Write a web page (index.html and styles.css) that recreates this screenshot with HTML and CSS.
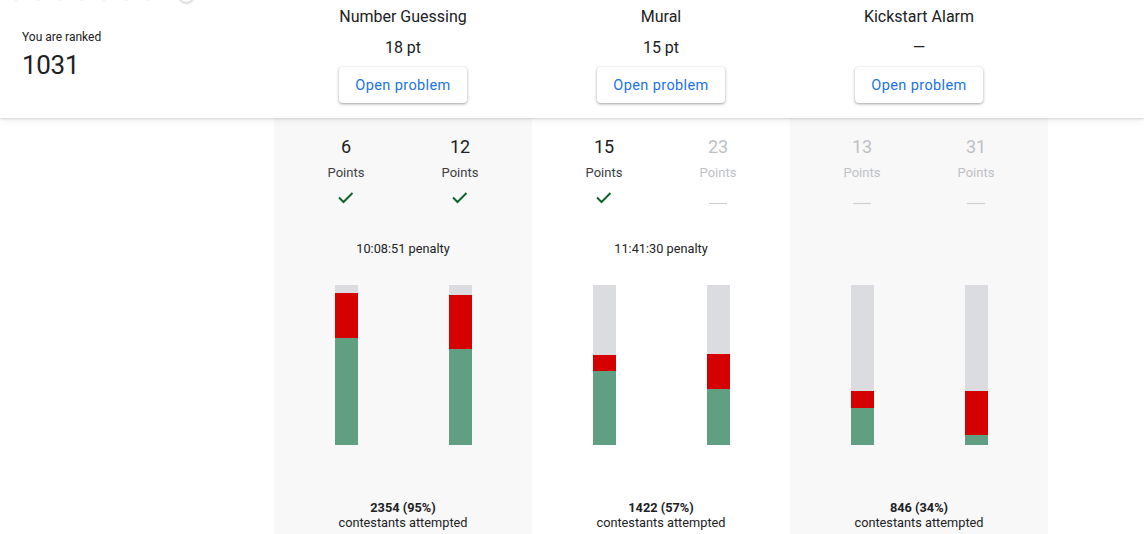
FILE: index.html
```html
<!DOCTYPE html>
<html>
<head>
<meta charset="utf-8">
<link rel="stylesheet" href="styles.css">
</head>
<body>
<header class="header">
  <div class="rank">
    <div class="rank-top">
      <span class="dot"></span><span class="dot"></span><span class="dot"></span><span class="dot"></span><span class="dot"></span><span class="dot"></span><span class="dot"></span>
      <span class="knob"></span>
    </div>
    <div class="rank-label">You are ranked</div>
    <div class="rank-value">1031</div>
  </div>
  <div class="hcol">
    <div class="htitle">Number Guessing</div>
    <div class="hscore">18 pt</div>
    <button class="open-btn">Open problem</button>
  </div>
  <div class="hcol">
    <div class="htitle">Mural</div>
    <div class="hscore">15 pt</div>
    <button class="open-btn">Open problem</button>
  </div>
  <div class="hcol">
    <div class="htitle">Kickstart Alarm</div>
    <div class="hscore">—</div>
    <button class="open-btn">Open problem</button>
  </div>
</header>
<main class="main">
  <div class="spacer"></div>

  <section class="col shaded">
    <div class="tests">
      <div class="test">
        <div class="pts">6</div>
        <div class="pts-label">Points</div>
        <svg class="status" viewBox="0 0 24 24"><path d="M5 11.5 L9.5 16 L18.5 7" fill="none" stroke="#0d652d" stroke-width="2"/></svg>
      </div>
      <div class="test">
        <div class="pts">12</div>
        <div class="pts-label">Points</div>
        <svg class="status" viewBox="0 0 24 24"><path d="M5 11.5 L9.5 16 L18.5 7" fill="none" stroke="#0d652d" stroke-width="2"/></svg>
      </div>
    </div>
    <div class="penalty">10:08:51 penalty</div>
    <div class="bars">
      <div class="bar-cell"><div class="bar"><div class="seg rest"></div><div class="seg wrong" style="height:45px"></div><div class="seg right" style="height:107px"></div></div></div>
      <div class="bar-cell"><div class="bar"><div class="seg rest"></div><div class="seg wrong" style="height:54px"></div><div class="seg right" style="height:96px"></div></div></div>
    </div>
    <div class="attempts"><b>2354 (95%)</b><span>contestants attempted</span></div>
  </section>

  <section class="col">
    <div class="tests">
      <div class="test">
        <div class="pts">15</div>
        <div class="pts-label">Points</div>
        <svg class="status" viewBox="0 0 24 24"><path d="M5 11.5 L9.5 16 L18.5 7" fill="none" stroke="#0d652d" stroke-width="2"/></svg>
      </div>
      <div class="test off">
        <div class="pts">23</div>
        <div class="pts-label">Points</div>
        <svg class="status" viewBox="0 0 24 24"><path d="M3 17.5 H21" fill="none" stroke="#cfd1d4" stroke-width="1.2"/></svg>
      </div>
    </div>
    <div class="penalty">11:41:30 penalty</div>
    <div class="bars">
      <div class="bar-cell"><div class="bar"><div class="seg rest"></div><div class="seg wrong" style="height:16px"></div><div class="seg right" style="height:74px"></div></div></div>
      <div class="bar-cell"><div class="bar"><div class="seg rest"></div><div class="seg wrong" style="height:35px"></div><div class="seg right" style="height:56px"></div></div></div>
    </div>
    <div class="attempts"><b>1422 (57%)</b><span>contestants attempted</span></div>
  </section>

  <section class="col shaded">
    <div class="tests">
      <div class="test off">
        <div class="pts">13</div>
        <div class="pts-label">Points</div>
        <svg class="status" viewBox="0 0 24 24"><path d="M3 17.5 H21" fill="none" stroke="#cfd1d4" stroke-width="1.2"/></svg>
      </div>
      <div class="test off">
        <div class="pts">31</div>
        <div class="pts-label">Points</div>
        <svg class="status" viewBox="0 0 24 24"><path d="M3 17.5 H21" fill="none" stroke="#cfd1d4" stroke-width="1.2"/></svg>
      </div>
    </div>
    <div class="penalty"></div>
    <div class="bars">
      <div class="bar-cell"><div class="bar"><div class="seg rest"></div><div class="seg wrong" style="height:17px"></div><div class="seg right" style="height:37px"></div></div></div>
      <div class="bar-cell"><div class="bar"><div class="seg rest"></div><div class="seg wrong" style="height:44px"></div><div class="seg right" style="height:10px"></div></div></div>
    </div>
    <div class="attempts"><b>846 (34%)</b><span>contestants attempted</span></div>
  </section>
</main>
</body>
</html>
```

FILE: styles.css
```css
* { box-sizing: border-box; }

html, body {
  margin: 0;
  padding: 0;
  background: #ffffff;
  font-family: Roboto, "Liberation Sans", Arial, sans-serif;
  color: #202124;
  overflow: hidden;
}

body {
  width: 1144px;
  height: 534px;
  display: flex;
  flex-direction: column;
}

.header {
  position: relative;
  z-index: 2;
  height: 118px;
  flex: 0 0 118px;
  display: flex;
  background: #ffffff;
  box-shadow: 0 1px 2px rgba(60, 64, 67, 0.15), 0 2px 6px rgba(60, 64, 67, 0.1);
}

.rank {
  width: 274px;
  padding-left: 22px;
}

.rank-top {
  display: flex;
  align-items: flex-end;
  gap: 18px;
  height: 20px;
  margin-top: -17px;
  margin-left: -8px;
}

.dot {
  width: 4px;
  height: 4px;
  border-radius: 50%;
  background: #eef0f2;
  margin-bottom: 2px;
}

.knob {
  width: 17px;
  height: 18px;
  border-radius: 50%;
  background: #fff;
  border: 1px solid #dadce0;
  box-shadow: 0 1px 2px rgba(60, 64, 67, 0.2);
  margin-left: 10px;
}

.rank-label {
  margin-top: 26px;
  font-size: 12px;
  line-height: 16px;
  color: #202124;
}

.rank-value {
  margin-top: 4px;
  font-size: 26px;
  line-height: 32px;
  font-weight: 400;
  color: #202124;
  letter-spacing: -0.3px;
}

.hcol {
  width: 258px;
  display: flex;
  flex-direction: column;
  align-items: center;
  padding-top: 7px;
}

.htitle {
  font-size: 16px;
  line-height: 20px;
  color: #202124;
}

.hscore {
  margin-top: 11px;
  font-size: 16px;
  line-height: 20px;
  color: #202124;
}

.open-btn {
  margin-top: 9px;
  width: 128px;
  height: 36px;
  border: none;
  border-radius: 4px;
  background: #ffffff;
  color: #1a73e8;
  font-family: Roboto, "Liberation Sans", Arial, sans-serif;
  font-size: 14.5px;
  font-weight: 400;
  letter-spacing: 0.4px;
  box-shadow: 0 1px 2px rgba(60, 64, 67, 0.3), 0 1px 3px 1px rgba(60, 64, 67, 0.15);
  padding: 0;
}

.main {
  flex: 1;
  display: flex;
}

.spacer {
  width: 274px;
}

.col {
  width: 258px;
  padding: 17px 15px 0;
  display: flex;
  flex-direction: column;
  align-items: stretch;
}

.col.shaded {
  background: #f8f8f8;
}

.tests {
  display: flex;
}

.test {
  width: 114px;
  display: flex;
  flex-direction: column;
  align-items: center;
}

.pts {
  font-size: 18px;
  line-height: 24px;
  color: #202124;
}

.pts-label {
  margin-top: 4px;
  font-size: 13px;
  line-height: 20px;
  color: #3c4043;
}

.status {
  margin-top: 3px;
  width: 24px;
  height: 24px;
  display: block;
}

.test.off .pts,
.test.off .pts-label {
  color: #bdc1c6;
}

.penalty {
  margin-top: 31px;
  height: 16px;
  font-size: 12.75px;
  line-height: 16px;
  text-align: center;
  color: #202124;
}

.bars {
  margin-top: 28px;
  display: flex;
}

.bar-cell {
  width: 114px;
  display: flex;
  justify-content: center;
}

.bar {
  width: 23px;
  height: 160px;
  display: flex;
  flex-direction: column;
}

.seg.rest {
  flex: 1;
  background: #dadce0;
}

.seg.wrong {
  background: #d50000;
}

.seg.right {
  background: #619f83;
}

.attempts {
  margin-top: 55px;
  display: flex;
  flex-direction: column;
  align-items: center;
  font-size: 12.75px;
  line-height: 15px;
  color: #202124;
}

.attempts b {
  font-weight: 700;
}
```
